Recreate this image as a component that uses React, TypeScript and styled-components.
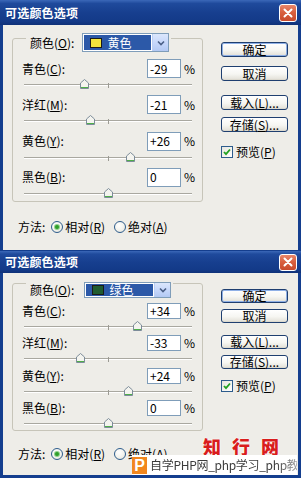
import React from "react";
import styled, { createGlobalStyle } from "styled-components";

const GlobalStyle = createGlobalStyle`
  html, body { margin: 0; padding: 0; background: #ffffff; }
  body {
    width: 301px; height: 478px; overflow: hidden;
    font-family: "Noto Sans CJK SC", "Noto Sans", sans-serif;
    color: #000;
  }
`;

type Cfg = {
  h: number;
  titleH: number;
  bottom: number;
  closeH: number;
  groupTop: number;
  groupH: number;
  legendTop: number;
  legendGap: number;
  selectH: number;
  rowsTop: number;
  pitch: number;
  inputH: number;
  trackTop: number;
  methodGap: number;
  btnTop: number;
  btnH: number;
  gaps: number[];
  swatch: string;
  colorName: string;
  values: number[];
};

const big: Cfg = {
  h: 251, titleH: 25, bottom: 1, closeH: 18,
  groupTop: 13, groupH: 164, legendTop: -6, legendGap: 8, selectH: 19,
  rowsTop: 20, pitch: 36.3, inputH: 19, trackTop: 6, methodGap: 17,
  btnTop: 17, btnH: 15, gaps: [9, 14, 7, 13],
  swatch: "#f2e43c", colorName: "黄色", values: [-29, -21, 26, 0],
};

const small: Cfg = {
  h: 227, titleH: 22, bottom: 3, closeH: 17,
  groupTop: 10, groupH: 148, legendTop: -2, legendGap: 10, selectH: 16,
  rowsTop: 19, pitch: 32.3, inputH: 16, trackTop: 7, methodGap: 15,
  btnTop: 16, btnH: 14, gaps: [6, 12, 6, 10],
  swatch: "#1f5c2f", colorName: "绿色", values: [34, -33, 24, 0],
};

const Page = styled.main`
  position: relative;
  width: 301px;
  height: 478px;
  display: flex;
  flex-direction: column;
  overflow: hidden;
`;

const Window = styled.section<{ $h: number; $bottom: number }>`
  box-sizing: border-box;
  flex: none;
  height: ${(p) => p.$h}px;
  display: flex;
  flex-direction: column;
  background: #143e8e;
  padding-bottom: ${(p) => p.$bottom}px;
`;

const TitleBar = styled.header<{ $h: number }>`
  flex: none;
  height: ${(p) => p.$h}px;
  display: flex;
  align-items: center;
  justify-content: space-between;
  padding: 0 4px 0 5px;
  background: linear-gradient(180deg, #3b68b8 0%, #1f4a9c 14%, #173f8f 50%, #133a88 85%, #0f3178 100%);
`;

const Title = styled.h1`
  margin: 0;
  font-size: 12px;
  line-height: 14px;
  font-weight: 700;
  color: #ffffff;
  letter-spacing: 0.2px;
`;

const CloseButton = styled.span<{ $h: number }>`
  box-sizing: border-box;
  width: 18px;
  height: ${(p) => p.$h}px;
  border: 1px solid #ffffff;
  border-radius: 3px;
  background: linear-gradient(180deg, #e9876b 0%, #d9603f 45%, #c84a2c 100%);
  display: flex;
  align-items: center;
  justify-content: center;
`;

const Body = styled.div`
  flex: 1;
  margin: 0 3px;
  background: #eeede8;
  display: flex;
  gap: 18px;
  padding-left: 9px;
`;

const LeftCol = styled.div<{ $pt: number }>`
  width: 191px;
  flex: none;
  padding-top: ${(p) => p.$pt}px;
  display: flex;
  flex-direction: column;
`;

const Group = styled.div<{ $h: number; $pt: number }>`
  position: relative;
  box-sizing: border-box;
  height: ${(p) => p.$h}px;
  border: 1px solid #c7c5b9;
  border-radius: 3px;
  padding: ${(p) => p.$pt}px 9px 0 9px;
  display: flex;
  flex-direction: column;
`;

const Legend = styled.div<{ $top: number; $gap: number }>`
  position: absolute;
  top: ${(p) => p.$top}px;
  left: 13px;
  display: flex;
  align-items: center;
  gap: ${(p) => p.$gap}px;
  padding: 0 2px 0 4px;
  background: #eeede8;
`;

const Text = styled.span`
  font-size: 12px;
  line-height: 14px;
  white-space: nowrap;
`;

const U = styled.span`
  text-decoration: underline;
  text-underline-offset: 1px;
`;

const Select = styled.div<{ $h: number }>`
  box-sizing: border-box;
  width: 87px;
  height: ${(p) => p.$h}px;
  border: 1px solid #7f9db9;
  background: #ffffff;
  display: flex;
`;

const SelectValue = styled.div`
  flex: 1;
  margin: 1px;
  background: #2c59a8;
  display: flex;
  align-items: center;
  gap: 5px;
  padding-left: 6px;
  color: #ffffff;
  font-size: 12px;
  line-height: 14px;
`;

const Swatch = styled.span<{ $c: string }>`
  box-sizing: border-box;
  width: 12px;
  height: 10px;
  background: ${(p) => p.$c};
  border: 1px solid #1a1a1a;
  flex: none;
`;

const SelectArrow = styled.div`
  width: 15px;
  flex: none;
  background: linear-gradient(180deg, #dce7fc 0%, #c3d5fa 60%, #b3c9f3 100%);
  border-left: 1px solid #bcd0f5;
  display: flex;
  align-items: center;
  justify-content: center;
`;

const Row = styled.div<{ $h: number }>`
  height: ${(p) => p.$h}px;
  flex: none;
  display: flex;
  flex-direction: column;
`;

const InputLine = styled.div<{ $h: number }>`
  height: ${(p) => p.$h}px;
  flex: none;
  display: flex;
  align-items: center;
`;

const Label = styled(Text)`
  flex: 1;
`;

const NumberBox = styled.div<{ $h: number }>`
  box-sizing: border-box;
  width: 34px;
  height: ${(p) => p.$h}px;
  border: 1px solid #7f9db9;
  background: #ffffff;
  display: flex;
  align-items: center;
  padding-left: 2px;
  font-size: 12px;
  line-height: 14px;
`;

const Percent = styled(Text)`
  width: 9px;
  margin-left: 3px;
`;

const Slider = styled.div`
  position: relative;
  flex: 1;
  margin: 0 1px 0 2px;
`;

const Track = styled.div<{ $top: number }>`
  position: absolute;
  left: 0;
  right: 0;
  top: ${(p) => p.$top}px;
  height: 1px;
  background: #a9a8a0;
  border-bottom: 1px solid #ffffff;
`;

const Tick = styled.div<{ $top: number }>`
  position: absolute;
  left: 50%;
  top: ${(p) => p.$top - 1}px;
  width: 1px;
  height: 5px;
  background: #9c9b94;
`;

const Thumb = styled.svg<{ $top: number }>`
  position: absolute;
  top: ${(p) => p.$top - 5}px;
  width: 9px;
  height: 10px;
  margin-left: -4px;
`;

const MethodRow = styled.div<{ $mt: number }>`
  margin-top: ${(p) => p.$mt}px;
  height: 16px;
  display: flex;
  align-items: center;
  padding-left: 6px;
`;

const RadioItem = styled.label<{ $ml: number }>`
  display: flex;
  align-items: center;
  gap: 2px;
  margin-left: ${(p) => p.$ml}px;
`;

const Radio = styled.span<{ $on: boolean }>`
  box-sizing: border-box;
  width: 12px;
  height: 12px;
  border-radius: 50%;
  border: 1px solid #2d5c8c;
  background: radial-gradient(circle at 40% 35%, #ffffff 0%, #f2f2ec 55%, #dcdcd2 100%);
  display: flex;
  align-items: center;
  justify-content: center;
  &::after {
    content: "";
    width: 4px;
    height: 4px;
    border-radius: 50%;
    background: ${(p) => (p.$on ? "#2f9e2a" : "transparent")};
    box-shadow: ${(p) => (p.$on ? "0 0 0 1px #8fd08a" : "none")};
  }
`;

const RightCol = styled.div<{ $pt: number }>`
  width: 67px;
  flex: none;
  padding-top: ${(p) => p.$pt}px;
  display: flex;
  flex-direction: column;
`;

const Button = styled.div<{ $h: number; $mt: number; $default?: boolean }>`
  box-sizing: border-box;
  width: 67px;
  height: ${(p) => p.$h}px;
  margin-top: ${(p) => p.$mt}px;
  border: 1px solid #1f3f70;
  border-radius: 3px;
  background: linear-gradient(180deg, #ffffff 0%, #f6f6f2 55%, #e6e4dc 90%, #d5d2c6 100%);
  box-shadow: ${(p) => (p.$default ? "inset 0 0 0 1px #8fb0e6" : "none")};
  display: flex;
  align-items: center;
  justify-content: center;
  font-size: 12px;
  line-height: 12px;
  white-space: nowrap;
`;

const CheckRow = styled.div<{ $mt: number }>`
  margin-top: ${(p) => p.$mt}px;
  display: flex;
  align-items: center;
  gap: 3px;
`;

const CheckBox = styled.span`
  box-sizing: border-box;
  width: 12px;
  height: 12px;
  border: 1px solid #2d5c8c;
  background: linear-gradient(135deg, #e6e6de 0%, #ffffff 100%);
  display: flex;
  align-items: center;
  justify-content: center;
`;

const RedMark = styled.div`
  position: absolute;
  left: 203px;
  top: 437px;
  font-size: 18px;
  line-height: 18px;
  font-weight: 900;
  color: #d91d1d;
  letter-spacing: 11px;
  white-space: nowrap;
  text-shadow: 0 0 2px #ffffff, 0 0 1px #ffffff;
`;

const SiteBar = styled.div`
  position: absolute;
  left: 132px;
  top: 455px;
  width: 165px;
  height: 20px;
  background: #ffffff;
  display: flex;
  align-items: center;
  gap: 3px;
  overflow: hidden;
`;

const Logo = styled.span`
  flex: none;
  width: 15px;
  height: 17px;
  background: #f2871e;
  color: #ffffff;
  font-family: "Liberation Sans", Arial, sans-serif;
  font-weight: 700;
  font-size: 16px;
  line-height: 17px;
  text-align: center;
`;

const SiteText = styled.span`
  font-size: 12px;
  line-height: 16px;
  color: #3c3c3c;
  white-space: nowrap;
  letter-spacing: -0.3px;
  -webkit-mask-image: linear-gradient(90deg, #000 0%, #000 78%, rgba(0,0,0,0.15) 100%);
  mask-image: linear-gradient(90deg, #000 0%, #000 78%, rgba(0,0,0,0.15) 100%);
`;

const channels = [
  { name: "青色", key: "C" },
  { name: "洋红", key: "M" },
  { name: "黄色", key: "Y" },
  { name: "黑色", key: "B" },
];

const fmt = (v: number) => (v > 0 ? `+${v}` : `${v}`);

function SliderThumb({ top, value }: { top: number; value: number }) {
  return (
    <Thumb $top={top} viewBox="0 0 9 10" style={{ left: `${50 + value / 2}%` }}>
      <path d="M0.5 4 L4.5 0.5 L8.5 4 L8.5 9.5 L0.5 9.5 Z" fill="#f4f4ef" stroke="#7d8c9a" strokeWidth="1" />
      <line x1="1" y1="8.5" x2="8" y2="8.5" stroke="#4fae4a" strokeWidth="1" />
    </Thumb>
  );
}

function Dialog({ c }: { c: Cfg }) {
  return (
    <Window $h={c.h} $bottom={c.bottom}>
      <TitleBar $h={c.titleH}>
        <Title>可选颜色选项</Title>
        <CloseButton $h={c.closeH}>
          <svg width="10" height="10" viewBox="0 0 10 10">
            <path d="M1.5 1.5 L8.5 8.5 M8.5 1.5 L1.5 8.5" stroke="#ffffff" strokeWidth="2" strokeLinecap="round" />
          </svg>
        </CloseButton>
      </TitleBar>
      <Body>
        <LeftCol $pt={c.groupTop}>
          <Group $h={c.groupH} $pt={c.rowsTop}>
            <Legend $top={c.legendTop} $gap={c.legendGap}>
              <Text>
                颜色(<U>O</U>):
              </Text>
              <Select $h={c.selectH}>
                <SelectValue>
                  <Swatch $c={c.swatch} />
                  {c.colorName}
                </SelectValue>
                <SelectArrow>
                  <svg width="8" height="6" viewBox="0 0 8 6">
                    <path d="M1 1.5 L4 4.5 L7 1.5" fill="none" stroke="#4a5f86" strokeWidth="1.6" />
                  </svg>
                </SelectArrow>
              </Select>
            </Legend>
            {channels.map((ch, i) => (
              <Row key={ch.key} $h={c.pitch}>
                <InputLine $h={c.inputH}>
                  <Label>
                    {ch.name}(<U>{ch.key}</U>):
                  </Label>
                  <NumberBox $h={c.inputH}>{fmt(c.values[i])}</NumberBox>
                  <Percent>%</Percent>
                </InputLine>
                <Slider>
                  <Track $top={c.trackTop} />
                  <Tick $top={c.trackTop} />
                  <SliderThumb top={c.trackTop} value={c.values[i]} />
                </Slider>
              </Row>
            ))}
          </Group>
          <MethodRow $mt={c.methodGap}>
            <Text>方法:</Text>
            <RadioItem $ml={6}>
              <Radio $on />
              <Text>
                相对(<U>R</U>)
              </Text>
            </RadioItem>
            <RadioItem $ml={9}>
              <Radio $on={false} />
              <Text>
                绝对(<U>A</U>)
              </Text>
            </RadioItem>
          </MethodRow>
        </LeftCol>
        <RightCol $pt={c.btnTop}>
          <Button $h={c.btnH} $mt={0} $default>
            确定
          </Button>
          <Button $h={c.btnH} $mt={c.gaps[0]}>
            取消
          </Button>
          <Button $h={c.btnH} $mt={c.gaps[1]}>
            载入(<U>L</U>)...
          </Button>
          <Button $h={c.btnH} $mt={c.gaps[2]}>
            存储(<U>S</U>)...
          </Button>
          <CheckRow $mt={c.gaps[3]}>
            <CheckBox>
              <svg width="8" height="8" viewBox="0 0 8 8">
                <path d="M1 4 L3 6.2 L7 1.5" fill="none" stroke="#21a121" strokeWidth="1.8" />
              </svg>
            </CheckBox>
            <Text>
              预览(<U>P</U>)
            </Text>
          </CheckRow>
        </RightCol>
      </Body>
    </Window>
  );
}

export default function App() {
  return (
    <>
      <GlobalStyle />
      <Page>
        <Dialog c={big} />
        <Dialog c={small} />
        <RedMark>知行网</RedMark>
        <SiteBar>
          <Logo>P</Logo>
          <SiteText>自学PHP网_php学习_php教程</SiteText>
        </SiteBar>
      </Page>
    </>
  );
}
